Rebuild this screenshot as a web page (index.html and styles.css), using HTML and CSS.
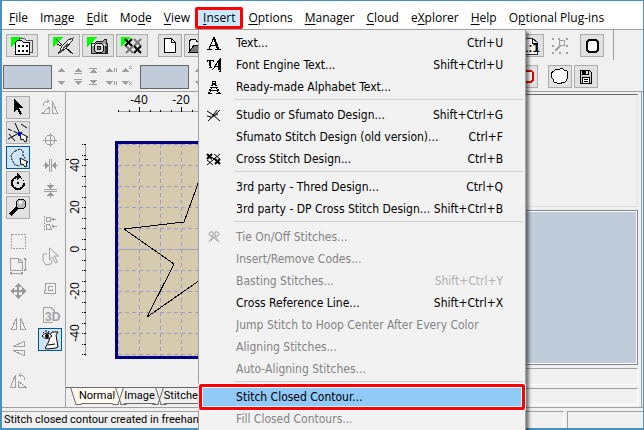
FILE: index.html
```html
<!DOCTYPE html>
<html lang="en">
<head>
  <meta charset="UTF-8">
  <title>Embroidery Editor</title>
  <meta name="viewport" content="width=device-width, initial-scale=1">
  <link rel="stylesheet" href="styles.css">
</head>
<body>

<div class="window">
  <nav class="menubar">
    <button class="menu-btn"><u>F</u>ile</button>
    <button class="menu-btn">Im<u>a</u>ge</button>
    <button class="menu-btn"><u>E</u>dit</button>
    <button class="menu-btn">Mo<u>d</u>e</button>
    <button class="menu-btn"><u>V</u>iew</button>
    <div class="menu-open">
      <button class="menu-btn active" aria-expanded="true"><u>I</u>nsert</button>
      <div class="dropdown" role="menu">
        <button class="item"><svg class="glyph" viewBox="0 0 16 16"><path d="M1 14h5M9 14h6M3 14L8 2l5 12M5 10h6" class="ink"/><path d="M8 3l4 11" class="ink bold"/></svg><span>Text...</span><kbd>Ctrl+U</kbd></button>
        <button class="item"><svg class="glyph" viewBox="0 0 16 16"><path d="M1 5V3h6v2M4 3v7M3 10h3M6 13c2 0 5-9 8-11v12M9 9h5M13 14h2" class="ink"/><path d="M13 3v10M4 3v6" class="ink bold"/></svg><span>Font Engine Text...</span><kbd>Shift+Ctrl+U</kbd></button>
        <button class="item"><svg class="glyph" viewBox="0 0 16 16"><path d="M6.500 2.500h3v2h-3zM5 6.500h2M9 6.500h2M5 8.500h6M4 11.500h8M2 14.500h4M10 14.500h5" class="ink"/><path d="M7 5L3 14M9 5l4 9" class="ink bold" stroke-dasharray="2 1"/></svg><span>Ready-made Alphabet Text...</span></button>
        <hr>
        <button class="item"><svg class="glyph smooth" viewBox="0 0 16 16"><path d="M1 4l5 3 8 7M2 14L14 3M4 12l7-9M7 9l5-2M1 9l4 1" class="ink"/></svg><span>Studio or Sfumato Design...</span><kbd>Shift+Ctrl+G</kbd></button>
        <button class="item"><i class="glyph"></i><span>Sfumato Stitch Design (old version)...</span><kbd>Ctrl+F</kbd></button>
        <button class="item"><svg class="glyph smooth" viewBox="0 0 16 16"><path d="M1 3l5 5M6 3L1 8M9 8l5 5M14 8l-5 5" class="ink bold"/><path d="M8 3l6 5M14 3L8 8M1 9l6 5M7 9l-6 5M6 6l4 4M10 6l-4 4" class="ink"/></svg><span>Cross Stitch Design...</span><kbd>Ctrl+B</kbd></button>
        <hr>
        <button class="item"><i class="glyph"></i><span>3rd party - Thred Design...</span><kbd>Ctrl+Q</kbd></button>
        <button class="item"><i class="glyph"></i><span>3rd party - DP Cross Stitch Design...</span><kbd>Shift+Ctrl+B</kbd></button>
        <hr>
        <button class="item" disabled><svg class="glyph smooth" viewBox="0 0 16 16"><path d="M4 3h3v4H4L3 5zM9 3h3l1 2-1 2H9zM7 7l-4 6M9 7l4 6M5 12l3-4 3 4" class="dim"/></svg><span>Tie On/Off Stitches...</span></button>
        <button class="item" disabled><i class="glyph"></i><span>Insert/Remove Codes...</span></button>
        <button class="item" disabled><i class="glyph"></i><span>Basting Stitches...</span><kbd>Shift+Ctrl+Y</kbd></button>
        <button class="item"><i class="glyph"></i><span>Cross Reference Line...</span><kbd>Shift+Ctrl+X</kbd></button>
        <button class="item" disabled><i class="glyph"></i><span>Jump Stitch to Hoop Center After Every Color</span></button>
        <button class="item" disabled><i class="glyph"></i><span>Aligning Stitches...</span></button>
        <button class="item" disabled><i class="glyph"></i><span>Auto-Aligning Stitches...</span></button>
        <hr>
        <button class="item selected"><i class="glyph"></i><span>Stitch Closed Contour...</span></button>
        <button class="item" disabled><i class="glyph"></i><span>Fill Closed Contours...</span></button>
      </div>
    </div>
    <button class="menu-btn"><u>O</u>ptions</button>
    <button class="menu-btn"><u>M</u>anager</button>
    <button class="menu-btn"><u>C</u>loud</button>
    <button class="menu-btn">e<u>X</u>plorer</button>
    <button class="menu-btn"><u>H</u>elp</button>
    <button class="menu-btn">O<u>p</u>tional Plug-ins</button>
  </nav>

  <div class="toolbar">
    <button class="tool wide" aria-label="Catalog"><svg viewBox="0 0 30 21"><path d="M4 2h10L4 12z" fill="#0f0"/><path d="M12 6V3h5l2 2h6v12h-3" fill="#ddd" stroke="#555"/><path d="M8.500 7.500l2-2h4l2 2h6v12h-14z" fill="#fff" stroke="#000"/><path d="M11 10h2v2h-2zM15 10h2v2h-2zM19 10h2v2h-2zM11 15h2v2h-2zM15 15h2v2h-2zM19 15h2v2h-2z"/></svg></button>
    <i class="gap"></i>
    <button class="tool wide" aria-label="Needle"><svg viewBox="0 0 30 21"><path d="M4 2h10L4 12z" fill="#0f0"/><path d="M7 4l9 9M17 13l7 6M9 18l5-4M8 9l4 2" stroke="#000" stroke-width="1"/><path d="M24 3l-5 2-6 6-3 7 6-4 7-8z" fill="#ddd" stroke="#333"/><path d="M11 17L22 5" stroke="#555"/><path d="M18 8l4-3-2 4z" fill="#fff"/></svg></button>
    <button class="tool wide" aria-label="Photo"><svg viewBox="0 0 30 21"><path d="M4 2h10L4 12z" fill="#0f0"/><path d="M8.500 8.500h3l2-2h6l2-2h2v4h1v10h-16z" fill="#999" stroke="#222"/><path d="M9 9h13v2H9z" fill="#eee"/><circle cx="16" cy="13" r="5" fill="#ddd" stroke="#000"/><circle cx="16" cy="13" r="2" fill="#777" stroke="#222"/><path d="M22 11h2v7h-2z" fill="#333"/></svg></button>
    <button class="tool wide" aria-label="Cross stitch"><svg viewBox="0 0 30 21" class="smooth"><path d="M4 2h10L4 12z" fill="#0f0"/><path d="M9 11l7 7M16 11l-7 7M17 4l7 7M24 4l-7 7" stroke="#777" stroke-width="2"/><path d="M8 4l7 7M15 4l-7 7M24 11l-7 7M17 11l7 7" stroke="#000" stroke-width="2"/></svg></button>
    <i class="gap"></i>
    <button class="tool" aria-label="New"><svg viewBox="0 0 22 21"><path d="M5.500 3.500h7l4 4v10h-11z" fill="#fff" stroke="#000"/><path d="M12.500 3.500v4h4" class="ink"/></svg></button>
    <button class="tool" aria-label="Open"><svg viewBox="0 0 22 21"><path d="M4.500 16V6l2-2h4l1 2h6v4" fill="#eee" stroke="#000"/><path d="M4 17l5-7h11l-5 7z" fill="#777" stroke="#000"/></svg></button>
    <span class="grow"></span>
    <button class="tool" aria-label="Actual size"><svg viewBox="0 0 22 21"><path d="M4.500 3.500h7l5 4v12h-12z" fill="#fff" stroke="#333"/><path d="M11.500 3v5h5" class="ink"/><text x="0" y="17" class="ratio">1:1</text></svg></button>
    <button class="tool flat" disabled aria-label="Zoom to selection"><svg viewBox="0 0 22 21"><path d="M3 3h2v2H3zM9 3h2v2H9zM17 3h2v2h-2zM3 10h2v2H3zM17 10h2v2h-2zM3 17h2v2H3zM10 17h2v2h-2zM17 17h2v2h-2z" fill="#a0a0a0"/><circle cx="13" cy="8" r="3" class="dim"/><path d="M11 11l-5 5" class="dim" stroke-width="2"/></svg></button>
    <button class="tool" aria-label="Hoop"><svg viewBox="0 0 22 21" class="smooth"><path d="M8 5h7l2 2v8l-2 2H8l-2-2V7z" fill="#fff" stroke="#000" stroke-width="2"/></svg></button>
    <i class="divider"></i>
  </div>

  <div class="toolbar second">
    <span class="swatch"></span>
    <svg class="steps" viewBox="0 0 84 24"><path d="M3 7l4-4 4 4zM3 16h8l-4 4zM20 16h8l-4 4zM20 7h8l-4-4zM35 8l4-4 4 4zM35 15h8l-4 4zM51 7l4-4 4 4zM51 16h8l-4 4zM67 7l4-4 4 4zM67 16h8l-4 4z" fill="#a0a0a0"/><path d="M20 8.500h8M20 14.500h8M35 3.500h8M35 19.500h8M60.500 3v4M62.500 3v4M60.500 16v4M62.500 16v4M75 1l3 3M78 1l-3 3M75 17l3 3M78 17l-3 3" class="dim"/></svg>
    <span class="swatch"></span>
    <svg class="steps" viewBox="0 0 84 24"><path d="M3 7l4-4 4 4zM3 16h8l-4 4z" fill="#a0a0a0"/></svg>
    <span class="grow"></span>
    <button class="tool" aria-label="Outline"><svg viewBox="0 0 22 21"><rect x="6" y="5" width="12" height="11" rx="3" fill="#fff" stroke="#e00000" stroke-width="2"/></svg></button>
    <button class="tool lone" aria-label="Freehand"><svg viewBox="0 0 22 21"><path d="M5 5q3-3 5-1 3-3 5 0 5 0 3 4 2 3 0 5-1 4-4 3-3 3-6 1-4 0-4-4-3-2-1-4-1-3 2-4z" fill="#fff" stroke="#000"/></svg></button>
    <button class="tool" aria-label="Save"><svg viewBox="0 0 22 21"><path d="M5.500 4.500h9l2 2v11h-11z" fill="#ccc" stroke="#000"/><path d="M7 5h7v4H7z" fill="#000"/><path d="M11 5h2v3h-2z" fill="#ddd"/><path d="M7.500 11.500h7v6h-7z" fill="#fff" stroke="#000"/><path d="M9 13h4M9 15h4" class="ink"/></svg></button>
  </div>

  <main class="workspace">
    <aside class="tools">
      <div class="tool-col">
        <button class="tool" aria-label="Select"><svg viewBox="0 0 22 21"><path d="M7 2v13l3-3 3 6 2-1-3-6h4z" fill="#000"/></svg></button>
        <button class="tool" aria-label="Edit nodes"><svg viewBox="0 0 22 21" class="smooth"><path d="M8 1l5 11M2 12l6 7M14 2l6 4M12 11L1 17" class="ink"/><path d="M1 7l12 5" class="ink" stroke-dasharray="4 2"/><path d="M11 10h4v4h-4z" fill="#00f"/><path d="M13 11l1 7 2-1 2 3 2-1-1-3 2-1z" fill="#fff" stroke="#000"/></svg></button>
        <button class="tool on" aria-label="Contour"><svg viewBox="0 0 22 21" class="smooth"><path d="M8 4l5-2 3 2v5l3 3M8 4L4 8l1 5 3 5 5 1" class="ink" stroke-dasharray="2 1"/><path d="M13 11l1 7 2-1 2 3 2-1-1-3 2-1z" fill="#fff" stroke="#000"/></svg></button>
        <button class="tool" aria-label="Rotate"><svg viewBox="0 0 22 21"><path d="M11 5a6 6 0 1 0 6 6" class="ink bold"/><path d="M11 5a6 6 0 0 1 6 6" class="ink" stroke-dasharray="1 2"/><path d="M10 1l5 4-5 3z"/><circle cx="11" cy="11" r="1"/></svg></button>
        <button class="tool" aria-label="Zoom"><svg viewBox="0 0 22 21"><path d="M3 18l7-7" stroke="#000" stroke-width="3"/><circle cx="14" cy="7" r="5" fill="#bbb" stroke="#000"/><path d="M12 4h3v3h-3z" fill="#fff"/></svg></button>
        <i class="gap"></i>
        <button class="tool flat" disabled aria-label="Marquee"><svg viewBox="0 0 22 21"><path d="M4.500 4.500h14v14h-14z" class="dim" stroke-dasharray="2 1"/></svg></button>
        <button class="tool flat" disabled aria-label="Resize"><svg viewBox="0 0 22 21"><path d="M3.500 3.500h8l4 3v9h-12zM11.500 3v4h4M18.500 3v13M17 5l1-2 2 2M17 14l1 2 2-2M3 18.500h13M5 17l-2 1 2 2M14 17l2 1-2 2" class="dim"/></svg></button>
        <button class="tool flat" disabled aria-label="Move"><svg viewBox="0 0 22 21"><path d="M11 3l4 4h-3v3h3V7l4 4-4 4v-3h-3v3h3l-4 4-4-4h3v-3H7v3l-4-4 4-4v3h3V7H7z" fill="#999"/></svg></button>
        <i class="gap"></i>
        <button class="tool flat" disabled aria-label="Flip horizontally"><svg viewBox="0 0 22 21"><path d="M9.500 5v11h-5zM13.500 5v11h5z" class="dim"/></svg></button>
        <button class="tool flat" disabled aria-label="Flip vertically"><svg viewBox="0 0 22 21"><path d="M17 3.500v5H6zM17 17.500v-5H6z" class="dim"/></svg></button>
        <i class="gap"></i>
        <button class="tool flat" disabled aria-label="Rotate flip"><svg viewBox="0 0 22 21"><path d="M8.500 4v12h-5zM11 10v6.500h8zM18 9q0-5-6-5M14 2l-2 2 2 2" class="dim"/></svg></button>
      </div>
      <div class="tool-col">
        <button class="tool flat" disabled aria-label="Rotate by angle"><svg viewBox="0 0 22 21"><path d="M18.500 16.500h-5v-12zM11 16.500H3l7-6zM4 9q0-5 6-5M8 2l2 2-2 2" class="dim"/></svg></button>
        <i class="gap"></i>
        <button class="tool flat" disabled aria-label="Center"><svg viewBox="0 0 22 21"><circle cx="11" cy="10" r="5" class="dim"/><path d="M11.500 3v14M4 10.500h14" class="dim"/></svg></button>
        <button class="tool flat" disabled aria-label="Center horizontally"><svg viewBox="0 0 22 21"><path d="M10.500 4v13M12.500 4v13M4 10.500h4M15 10.500h4" class="dim"/><path d="M6 7l4 3.500L6 14zM17 7l-4 3.500 4 3.500z" fill="#999"/></svg></button>
        <button class="tool flat" disabled aria-label="Center vertically"><svg viewBox="0 0 22 21"><path d="M5 9.500h13M5 11.500h13M11.500 3v4M11.500 14v4" class="dim"/><path d="M8 5h7l-3.500 4zM8 16h7l-3.500-4z" fill="#999"/></svg></button>
        <i class="gap"></i>
        <button class="tool flat" disabled aria-label="Align"><svg viewBox="0 0 22 21"><path d="M5.500 3v15" class="dim" stroke-dasharray="2 1"/><path d="M7.500 4.500h4v4h-4zM7.500 11.500h3l2 5h-5zM12 6.500h5M13 13.500h5M15 5l-2 1 2 2M15 12l-2 1 2 2" class="dim"/></svg></button>
        <i class="gap"></i>
        <button class="tool flat" disabled aria-label="Pick object"><svg viewBox="0 0 22 21" class="smooth"><path d="M10.500 2v12l3-3 3 6 2-1-3-6h4zM8 8H4v7l3 4 5-1 1-4" class="dim"/></svg></button>
        <i class="gap"></i>
        <button class="tool flat" disabled aria-label="Path"><svg viewBox="0 0 22 21"><path d="M6.500 4.500h10v10h-11v-3h1zM14 7.500H9.500v4h4v-2" class="dim"/></svg></button>
        <button class="tool flat" disabled aria-label="3D view"><svg viewBox="0 0 22 21"><path d="M4 3.500h8l3 3V8M4.500 3v15H14" class="dim"/><text x="6" y="17" class="three">3D</text></svg></button>
        <button class="tool on" aria-label="Show contours"><svg viewBox="0 0 22 21" class="smooth"><path d="M7 18l3-6 1-6 2-3h6l-2 3 1 6 1 6-2 1-9 1-2-1z" fill="#fff" stroke="#000"/><path d="M3 7q5-6 10 0-5 5-10 0z" fill="#fff" stroke="#000"/><circle cx="8" cy="7" r="2"/><path d="M4 3l1 1M7 1v2M10 2l-1 2M9 16l7-1" class="ink"/></svg></button>
      </div>
    </aside>

    <section class="design">
      <svg class="canvas" role="img" aria-label="Hoop with star contour">
        <defs>
          <pattern id="ticksX" x="52" y="0" width="21" height="4" patternUnits="userSpaceOnUse"><path d="M.5 2v2M11.500 2v2" stroke="#000"/></pattern>
          <pattern id="ticksY" x="0" y="52" width="3" height="21" patternUnits="userSpaceOnUse"><path d="M0 .5h2M0 11.500h2" stroke="#000"/></pattern>
          <pattern id="grid" x="52" y="52" width="21" height="21" patternUnits="userSpaceOnUse"><path d="M.5 0v21M0 .5h21" fill="none" stroke="#9c9ccc" stroke-dasharray="4 3"/></pattern>
        </defs>
        <text x="73" y="12" class="num">-40</text>
        <text x="115" y="12" class="num">-20</text>
        <path d="M52 19.500h212" stroke="#a0a0a0"/>
        <rect x="52" y="16" width="212" height="4" fill="url(#ticksX)"/>
        <path d="M73.500 15v4M115.500 15v4" stroke="#000"/>
        <g transform="rotate(-90)">
          <text x="-73" y="13" class="num">40</text>
          <text x="-115" y="13" class="num">20</text>
          <text x="-157" y="13" class="num">0</text>
          <text x="-199" y="13" class="num">-20</text>
          <text x="-241" y="13" class="num">-40</text>
        </g>
        <path d="M19.500 52v212" stroke="#a0a0a0"/>
        <rect x="16" y="52" width="4" height="212" fill="url(#ticksY)"/>
        <path d="M0 67.500h3M18 67.500h4" stroke="#000"/>
        <rect x="50" y="50" width="215" height="215" fill="#d6cbae" stroke="#000080" stroke-width="3"/>
        <rect x="52" y="52" width="212" height="212" fill="url(#grid)"/>
        <path d="M53 157.500h211" stroke="#a0a0d0" stroke-dasharray="6 2"/>
        <path d="M157 23l-39 107-60 7 50 35-27 53 76-53" class="star"/>
      </svg>
      <div class="tabs">
        <button class="tab current">Normal</button>
        <button class="tab">Image</button>
        <button class="tab">Stitches</button>
      </div>
    </section>

    <aside class="info">
      <div class="preview"></div>
      <div class="palette"></div>
      <div class="field"></div>
      <div class="field"></div>
    </aside>
  </main>

  <footer class="status">
    <span class="message">Stitch closed contour created in freehand</span>
    <span class="cell"></span>
  </footer>
</div>

</body>
</html>
```
FILE: styles.css
```css
:root {
  --face: #f0f0f0;
  --line: #a0a0a0;
  --frame: #4a90b8;
  --steel: #c0ccda;
  --mark: #ff0000;
}

* {
  box-sizing: border-box;
}

body {
  margin: 0;
  overflow: hidden;
  font-family: "Open Sans", "Noto Sans", sans-serif;
  font-size: 12px;
  color: #000;
}

button {
  font: inherit;
  color: inherit;
  padding: 0;
  border: none;
  background: none;
}

svg {
  display: block;
  shape-rendering: crispEdges;
}

.smooth {
  shape-rendering: auto;
}

.ink {
  fill: none;
  stroke: #000;
}

.bold {
  stroke-width: 2;
}

.dim {
  fill: none;
  stroke: var(--line);
}

.window {
  display: flex;
  flex-direction: column;
  height: 100vh;
  background: var(--face);
  border: 1px solid var(--frame);
  border-left-width: 2px;
  border-bottom-width: 2px;
}

/* Menu bar */
.menubar {
  display: flex;
  align-items: center;
  height: 28px;
  padding: 6px 1px 0;
  background: #fff;
  white-space: nowrap;
}

.menu-btn {
  padding: 0 6px;
  line-height: 22px;
}

.menu-btn u {
  text-underline-offset: 2px;
}

.menu-open {
  position: relative;
}

.menu-btn.active {
  background: #cce8ff;
  line-height: 16px;
  padding: 0 5px;
  border: 3px solid var(--mark);
  border-radius: 2px;
  margin: 0 -1px;
}

/* Dropdown */
.dropdown {
  position: absolute;
  z-index: 10;
  top: 22px;
  left: 2px;
  width: 328px;
  padding: 2px 0 8px;
  background: #f2f2f2;
  border: 1px solid var(--line);
  box-shadow: 3px 3px 3px rgba(0, 0, 0, 0.5);
  font-family: "DejaVu Sans Condensed", "DejaVu Sans", sans-serif;
  font-stretch: condensed;
}

.item {
  display: flex;
  align-items: center;
  width: 100%;
  height: 22px;
  padding: 0 22px 0 7px;
  text-align: left;
}

.item span {
  flex: 1;
}

.item kbd {
  font-family: inherit;
}

.item:disabled {
  color: #838383;
}

.item:disabled kbd {
  color: #b0b0b0;
}

.item.selected {
  background: #91c9f7;
  border: 3px solid var(--mark);
  border-radius: 2px;
  height: 26px;
  margin: -2px 0;
  padding-left: 4px;
  box-shadow: 0 0 0 1px #fff, inset 0 0 0 1px #fff;
}

.glyph {
  flex: none;
  width: 16px;
  height: 16px;
  margin-right: 14px;
}

.dropdown hr {
  height: 1px;
  margin: 1px 2px 4px 35px;
  border: none;
  background: #d0d0d0;
}

/* Toolbars */
.toolbar {
  display: flex;
  align-items: center;
  gap: 2px;
  height: 31px;
  padding: 0 29px 0 4px;
  border-top: 1px solid var(--line);
}

.toolbar.second {
  border-top: none;
  padding: 2px 45px 0 1px;
}

.tool {
  flex: none;
  width: 24px;
  height: 23px;
  background: #e1e1e1;
  border: 1px solid #adadad;
}

.tool svg {
  width: 100%;
  height: 100%;
}

.tool.wide {
  width: 32px;
}

.tool.flat {
  background: none;
  border-color: transparent;
}

.tool.on {
  background: #cce4f7;
  border-color: #00569d;
}

.tool.lone {
  margin-left: 8px;
}

.toolbar .gap {
  width: 6px;
}

.toolbar .flat {
  margin: 0 6px 0 2px;
}

.divider {
  align-self: stretch;
  width: 1px;
  margin-left: 7px;
  background: var(--line);
}

.ratio {
  font: bold 13px "Liberation Sans", sans-serif;
}

.three {
  font: bold 12px "Liberation Sans", sans-serif;
  fill: var(--line);
}

.grow {
  flex: 1;
}

.swatch {
  width: 49px;
  height: 24px;
  background: var(--steel);
  border: 1px solid #666;
}

.steps {
  width: 84px;
  height: 24px;
}

/* Workspace */
.workspace {
  flex: 1;
  display: flex;
  min-height: 0;
  border-top: 1px solid var(--line);
  border-bottom: 1px solid var(--line);
}

.tools {
  display: flex;
  gap: 8px;
  padding: 4px 3px 0 4px;
  border-right: 1px solid var(--line);
}

.tool-col {
  display: flex;
  flex-direction: column;
  gap: 2px;
}

.tool-col .gap {
  height: 6px;
}

.design {
  flex: 1;
  min-width: 0;
  display: flex;
  flex-direction: column;
}

.canvas {
  flex: 1;
  width: 100%;
  min-height: 0;
}

.num {
  font: 12px "Open Sans", sans-serif;
  text-anchor: middle;
}

.star {
  fill: none;
  stroke: #000;
}

.tabs {
  display: flex;
  gap: 9px;
  height: 20px;
  padding-left: 13px;
  border-top: 1px solid #696969;
}

.tab {
  position: relative;
  height: 16px;
  line-height: 16px;
  font-family: Roboto, sans-serif;
  font-size: 11px;
  border-bottom: 1px solid #696969;
}

.tab::before,
.tab::after {
  content: "";
  position: absolute;
  top: 0;
  width: 5px;
  height: 16px;
  border-bottom: 1px solid #696969;
}

.tab::before {
  right: 100%;
  border-left: 1px solid #696969;
  transform: skewX(18deg);
}

.tab::after {
  left: 100%;
  border-right: 1px solid #696969;
  transform: skewX(-18deg);
}

.tab.current,
.tab.current::before,
.tab.current::after {
  background: #fffbf0;
}

/* Right panel */
.info {
  display: flex;
  flex-direction: column;
  gap: 3px;
  width: 36%;
  padding: 2px 3px 2px 0;
  border-right: 1px solid var(--line);
  margin-right: 1px;
}

.preview {
  flex: 8;
  border-top: 1px solid #696969;
  border-right: 1px solid #e0e0e0;
  border-bottom: 1px solid #e0e0e0;
}

.palette {
  flex: 11;
  background: var(--steel);
  border: 1px solid #808590;
  box-shadow: inset 0 0 0 1px #fff;
}

.field {
  height: 17px;
  border-top: 1px solid var(--line);
  border-right: 1px solid #fff;
  border-bottom: 1px solid #fff;
}

/* Status bar */
.status {
  display: flex;
  gap: 3px;
  height: 20px;
  padding-top: 3px;
}

.message {
  flex: 1;
  padding-left: 2px;
  line-height: 15px;
  font-family: Roboto, sans-serif;
  font-size: 11px;
  border-top: 1px solid var(--line);
  border-right: 1px solid #fff;
}

.cell {
  width: 76px;
  border-top: 1px solid var(--line);
  border-left: 1px solid var(--line);
}
```
